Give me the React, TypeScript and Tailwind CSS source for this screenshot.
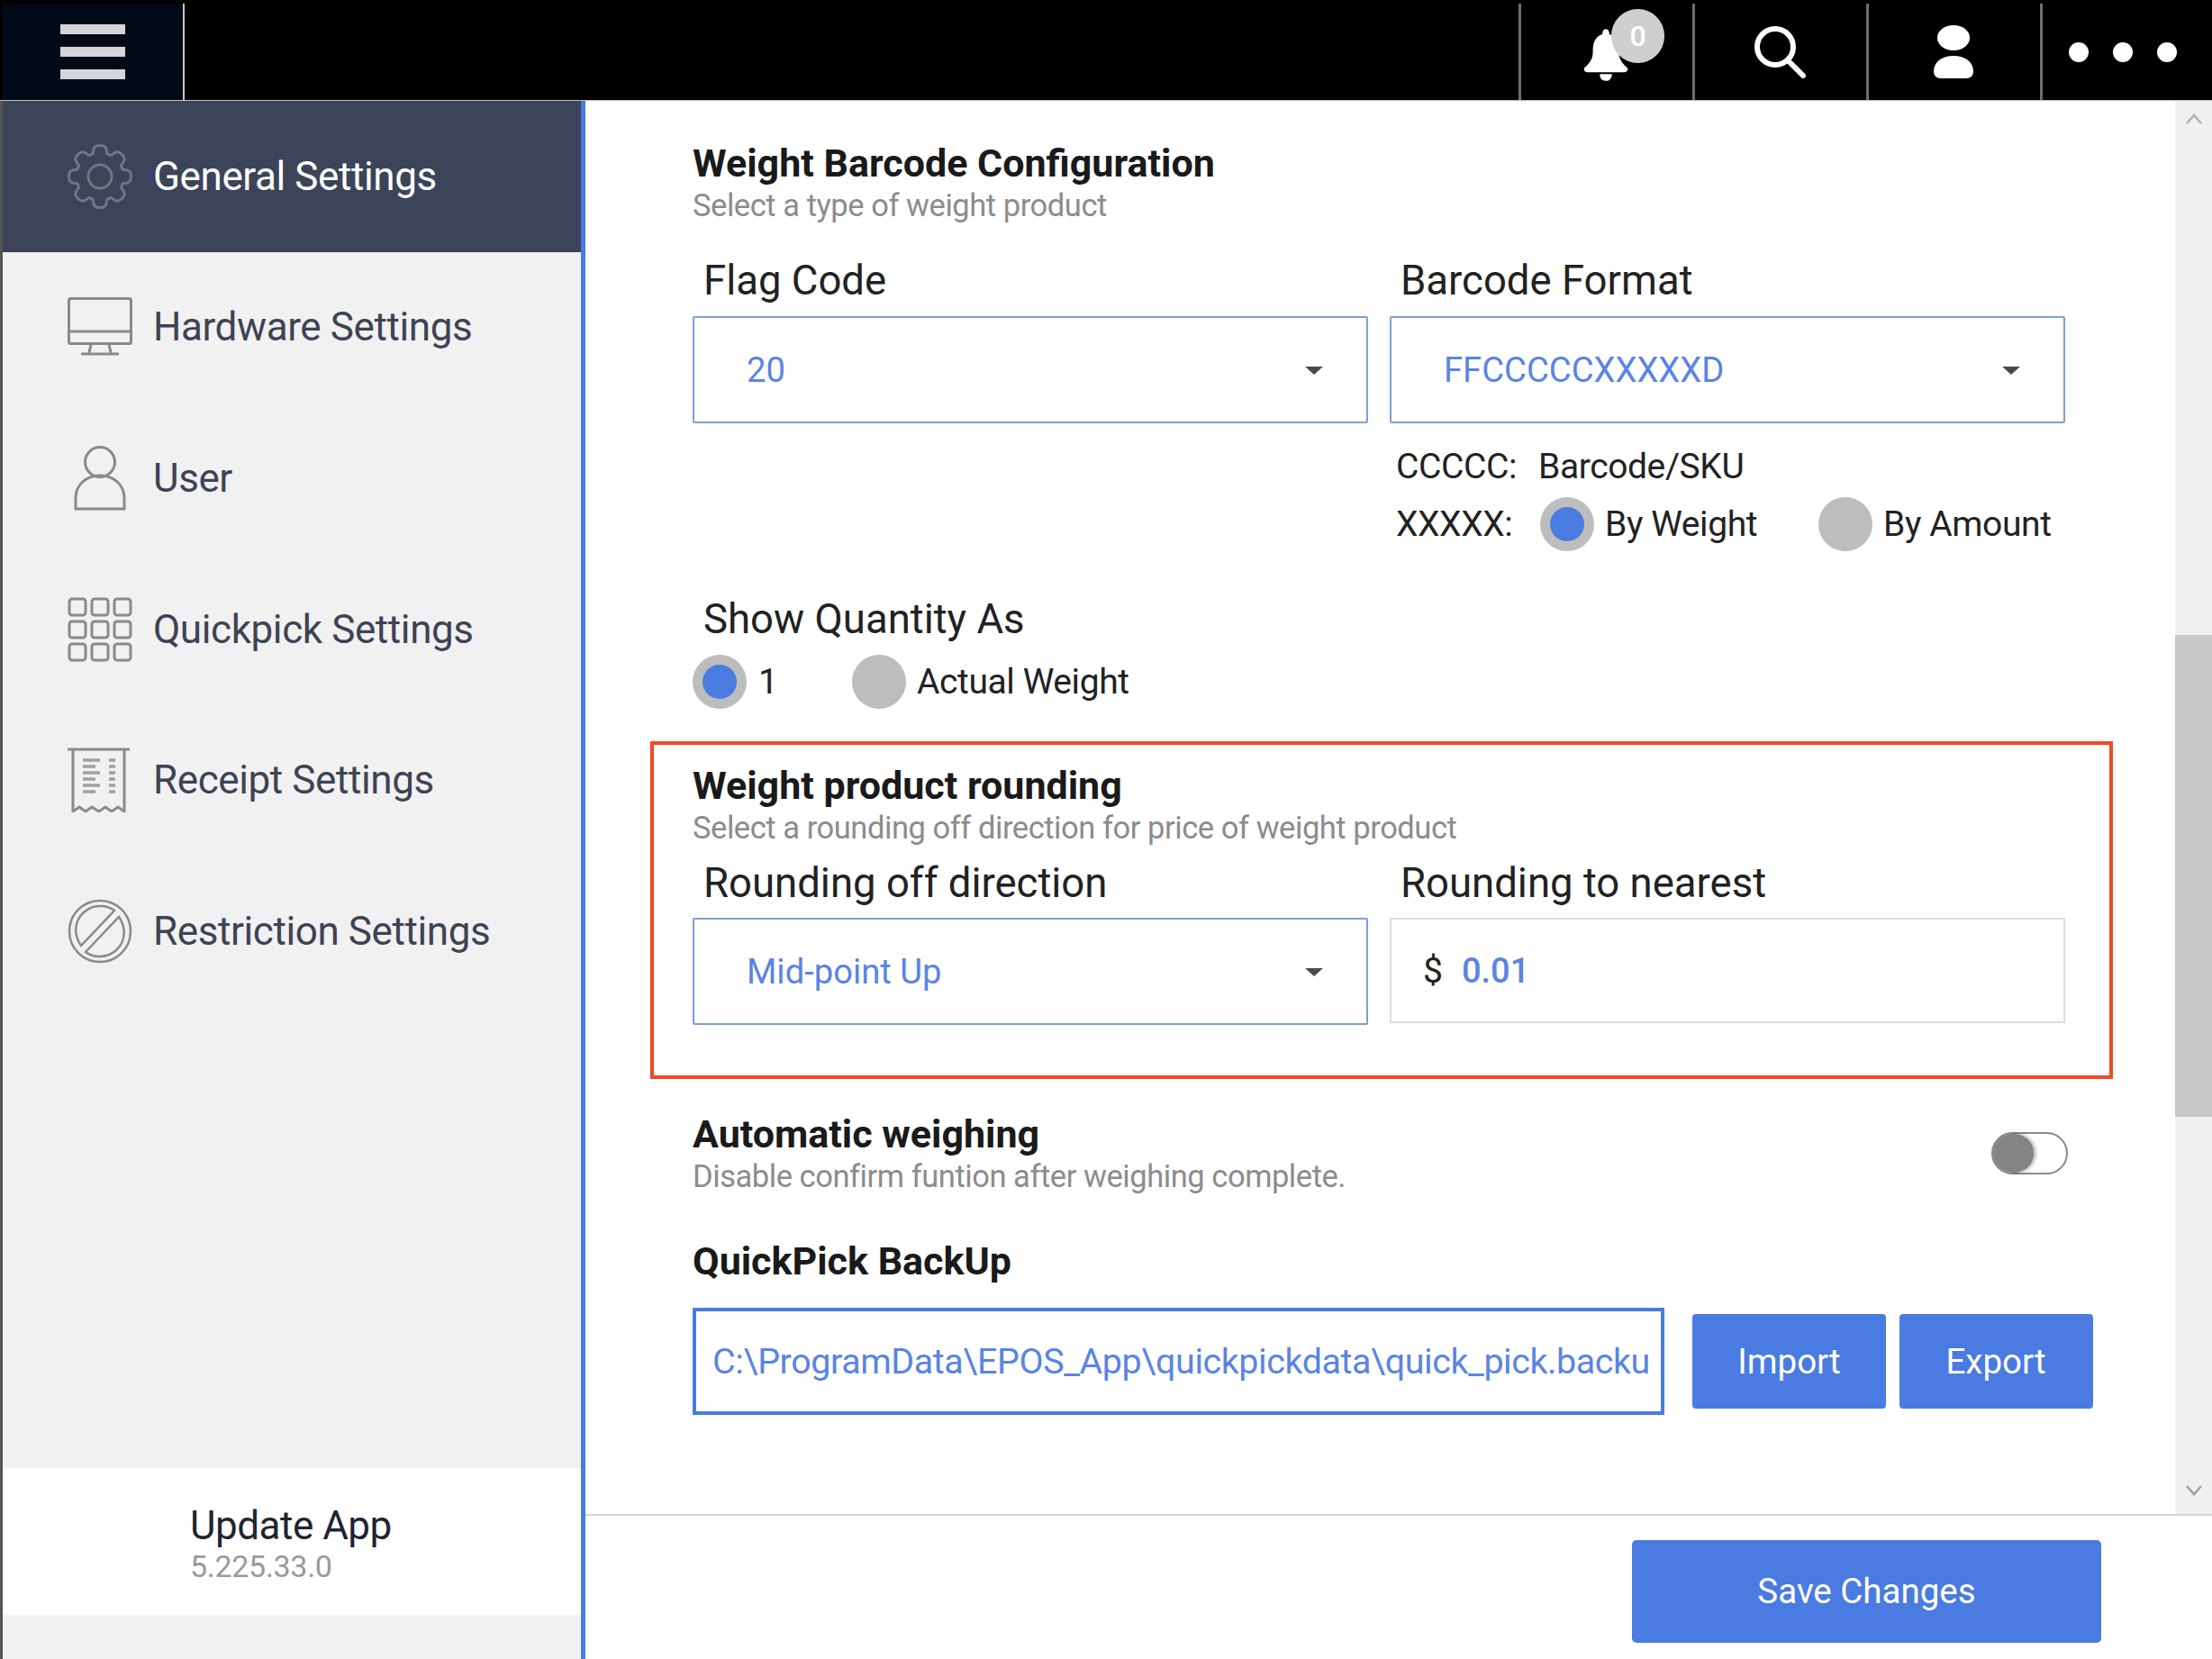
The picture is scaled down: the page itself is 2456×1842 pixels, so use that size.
import { ReactNode } from 'react';

const gearPath = (() => {
  let d = '';
  const at = (a: number, r: number) => `${(36 + r * Math.cos(a)).toFixed(1)} ${(36 + r * Math.sin(a)).toFixed(1)}`;
  for (let i = 0; i < 8; i++) {
    const a = (i * Math.PI) / 4 - Math.PI / 2;
    d += `${i === 0 ? 'M' : 'L'}${at(a - 0.3, 26.5)}`;
    d += `C${at(a - 0.22, 33)} ${at(a - 0.17, 35)} ${at(a, 34.5)}`;
    d += `C${at(a + 0.17, 35)} ${at(a + 0.22, 33)} ${at(a + 0.3, 26.5)}`;
  }
  return `${d}Z`;
})();

function GearIcon() {
  return (
    <svg width="72" height="72" viewBox="0 0 72 72" fill="none" stroke="#707685" strokeWidth="3" strokeLinejoin="round">
      <path d={gearPath} />
      <circle cx="36" cy="36" r="13" />
    </svg>
  );
}

function MonitorIcon() {
  return (
    <svg width="72" height="66" viewBox="0 0 72 66" fill="none" stroke="#8a8a8a" strokeWidth="3">
      <rect x="1.5" y="1.5" width="69" height="50" rx="2" />
      <path d="M2 38h68M26 52l-2 10M46 52l2 10M15 63h42" />
    </svg>
  );
}

function UserIcon() {
  return (
    <svg width="60" height="72" viewBox="0 0 60 72" fill="none" stroke="#8a8a8a" strokeWidth="3">
      <circle cx="30" cy="18" r="16.5" />
      <path d="M3 70V58C3 44 14 33 30 33s27 11 27 25v12z" />
    </svg>
  );
}

function GridIcon() {
  const cells = [0, 1, 2, 3, 4, 5, 6, 7, 8];
  return (
    <svg width="72" height="72" viewBox="0 0 72 72" fill="none" stroke="#8a8a8a" strokeWidth="3">
      {cells.map((i) => (
        <rect key={i} x={2 + (i % 3) * 25} y={2 + Math.floor(i / 3) * 25} width="18" height="18" rx="3" />
      ))}
    </svg>
  );
}

function ReceiptIcon() {
  return (
    <svg width="70" height="72" viewBox="0 0 70 72" fill="none" stroke="#8a8a8a" strokeWidth="3">
      <path d="M0 2h69M6 2v69l7-5 7 5 7-5 8 5 7-5 7 5 7-5 7 5V2" />
      <path d="M17 14h19M17 21h14M17 28h19M17 35h14M17 42h19M17 49h14" strokeWidth="3.5" stroke="#a0a0a0" />
      <path d="M46 14h7M46 21h7M46 28h7M46 35h7M46 42h7M46 49h7" strokeWidth="3.5" stroke="#a0a0a0" />
    </svg>
  );
}

function RestrictionIcon() {
  return (
    <svg width="72" height="72" viewBox="0 0 72 72" fill="none" stroke="#8a8a8a" strokeWidth="2.5">
      <circle cx="36" cy="36" r="34" />
      <path d="M15 52C6 39 8 24 18 15S43 6 52 13z" />
      <path d="M57 20c9 13 7 28-3 37s-25 9-34 2z" />
    </svg>
  );
}

function TopCell({ children }: { children: ReactNode }) {
  return <div className="relative flex h-full w-[193px] items-center justify-center border-l-[3px] border-[#6f6f6f]">{children}</div>;
}

function NavItem({ icon, label, active }: { icon: ReactNode; label: string; active?: boolean }) {
  return (
    <div className={`flex h-[167.6px] items-center ${active ? 'bg-[#3b4459] text-white' : 'text-[#3d4354]'}`}>
      <div className="ml-[71.5px] flex w-[95.5px] shrink-0">{icon}</div>
      <span className="text-[44px] tracking-[-0.4px]">{label}</span>
    </div>
  );
}

function Heading({ title, sub }: { title: string; sub: string }) {
  return (
    <div>
      <div className="text-[43px] font-bold leading-[40px] text-[#1a1a1a]">{title}</div>
      <div className="mt-[10px] text-[34.5px] leading-[34px] tracking-[-0.45px] text-[#8c8c8c]">{sub}</div>
    </div>
  );
}

function FieldLabel({ children }: { children: ReactNode }) {
  return <div className="pl-[12px] text-[45.5px] leading-[40px] text-[#222222]">{children}</div>;
}

function Select({ value }: { value: string }) {
  return (
    <div className="flex h-[119px] w-[750px] items-center justify-between rounded-[2px] border-2 border-[#7f9fd4] pl-[58px] pr-[48px]">
      <span className="mt-[3px] text-[38.2px] text-[#5a84e2]">{value}</span>
      <span className="mt-[2px] h-0 w-0 border-x-[10px] border-t-[9px] border-x-transparent border-t-[#4a4a4a]" />
    </div>
  );
}

function Radio({ checked }: { checked?: boolean }) {
  return (
    <span className="flex h-[60px] w-[60px] shrink-0 items-center justify-center rounded-full bg-[#bdbdbd]">
      {checked && <span className="h-[38px] w-[38px] rounded-full bg-[#4a7be0]" />}
    </span>
  );
}

export default function App() {
  return (
    <div className="flex h-[1842px] w-[2456px] flex-col overflow-hidden bg-white [font-family:Roboto,sans-serif]">
      {/* top bar */}
      <header className="flex h-[111px] shrink-0 bg-black pt-[4px]">
        <div className="ml-[3px] flex w-[202px] flex-col items-center justify-center gap-[14px] border-r-[2px] border-[#c8c8c8] bg-[#030a17]">
          <span className="h-[11px] w-[72px] bg-[#d4d4da]" />
          <span className="h-[11px] w-[72px] bg-[#d4d4da]" />
          <span className="h-[11px] w-[72px] bg-[#d4d4da]" />
        </div>
        <div className="flex-1" />
        <TopCell>
          <svg width="50" height="60" viewBox="0 0 52 62" fill="white" className="mr-[2px] mt-[6px]">
            <path d="M26 1c3 0 4 3 4 6 9 3 11 11 11 20 0 8 3 13 10 19 1 3-1 5-4 5H5c-3 0-5-2-4-5 7-6 10-11 10-19 0-9 2-17 11-20 0-3 1-6 4-6z" />
            <path d="M19 53h14c0 5-3 8-7 8s-7-3-7-8z" />
          </svg>
          <div className="absolute left-[100px] top-[6px] flex h-[60px] w-[59px] items-center justify-center rounded-full bg-[#cfcfcf] text-[32px] font-medium text-white">
            0
          </div>
        </TopCell>
        <TopCell>
          <svg width="60" height="58" viewBox="0 0 60 58" fill="none" stroke="white" strokeWidth="6" strokeLinecap="round">
            <circle cx="24" cy="23" r="20" />
            <path d="M39 39l16 16" />
          </svg>
        </TopCell>
        <TopCell>
          <svg width="46" height="60" viewBox="0 0 46 60" fill="white" className="mr-[2px]">
            <ellipse cx="23" cy="14" rx="18" ry="14" />
            <path d="M1 51c0-10 9-17 22-17s22 7 22 17c0 5-3 8-8 8H9c-5 0-8-3-8-8z" />
          </svg>
        </TopCell>
        <div className="flex h-full w-[191px] items-center justify-center gap-[27px] border-l-[3px] border-[#6f6f6f] pr-[10px]">
          <span className="h-[22px] w-[22px] rounded-full bg-white" />
          <span className="h-[22px] w-[22px] rounded-full bg-white" />
          <span className="h-[22px] w-[22px] rounded-full bg-white" />
        </div>
      </header>

      <div className="flex min-h-0 flex-1 border-t border-[#bdbdbd]">
        {/* sidebar */}
        <aside className="flex w-[650px] shrink-0 flex-col border-l-[3.5px] border-r-[5px] border-l-[#555555] border-r-[#4a7be0] bg-[#f1f1f1]">
          <NavItem active icon={<GearIcon />} label="General Settings" />
          <NavItem icon={<MonitorIcon />} label="Hardware Settings" />
          <NavItem icon={<div className="pl-[6px]"><UserIcon /></div>} label="User" />
          <NavItem icon={<GridIcon />} label="Quickpick Settings" />
          <NavItem icon={<ReceiptIcon />} label="Receipt Settings" />
          <NavItem icon={<RestrictionIcon />} label="Restriction Settings" />
          <div className="flex-1" />
          <div className="mb-[49px] flex h-[163px] flex-col justify-center bg-white pl-[208px] pt-[5px]">
            <div className="text-[44px] leading-[44px] tracking-[-0.5px] text-[#1e2433]">Update App</div>
            <div className="mt-[5px] text-[34px] leading-[36px] tracking-[-0.3px] text-[#9a9a9a]">5.225.33.0</div>
          </div>
        </aside>

        <main className="flex min-w-0 flex-1 flex-col">
          <div className="flex h-[1571px] shrink-0 border-b-[2px] border-[#d4d4d4]">
            <div className="flex-1 pl-[72px] pt-[49px]">
              <section className="pl-[47px]">
                <Heading title="Weight Barcode Configuration" sub="Select a type of weight product" />
                <div className="mt-[47px] grid w-[1524px] grid-cols-[750px_750px] gap-x-[24px]">
                  <FieldLabel>Flag Code</FieldLabel>
                  <FieldLabel>Barcode Format</FieldLabel>
                  <div className="mt-[19px]"><Select value="20" /></div>
                  <div className="mt-[19px]"><Select value="FFCCCCCXXXXXD" /></div>
                </div>
                <div className="ml-[781px] mt-[28px] flex h-[40px] items-center text-[39px] tracking-[-0.4px] text-[#222222]">
                  <span className="w-[158px]">CCCCC:</span>
                  <span>Barcode/SKU</span>
                </div>
                <div className="ml-[781px] mt-[14px] flex h-[60px] items-center text-[39px] tracking-[-0.4px] text-[#222222]">
                  <span className="w-[160px]">XXXXX:</span>
                  <Radio checked />
                  <span className="ml-[12px] w-[237px]">By Weight</span>
                  <Radio />
                  <span className="ml-[12px]">By Amount</span>
                </div>
                <div className="mt-[56px]"><FieldLabel>Show Quantity As</FieldLabel></div>
                <div className="mt-[19px] flex h-[60px] items-center text-[39px] tracking-[-0.4px] text-[#222222]">
                  <Radio checked />
                  <span className="ml-[13px] w-[104px]">1</span>
                  <Radio />
                  <span className="ml-[12px]">Actual Weight</span>
                </div>
              </section>

              {/* highlighted block */}
              <section className="mt-[36px] h-[375px] w-[1624px] border-4 border-[#f04a25] pl-[43px] pt-[25px]">
                <Heading title="Weight product rounding" sub="Select a rounding off direction for price of weight product" />
                <div className="mt-[25px] grid w-[1524px] grid-cols-[750px_750px] gap-x-[24px]">
                  <FieldLabel>Rounding off direction</FieldLabel>
                  <FieldLabel>Rounding to nearest</FieldLabel>
                  <div className="mt-[18px]"><Select value="Mid-point Up" /></div>
                  <div className="mt-[18px] flex h-[117px] w-[750px] items-center border-2 border-[#dddddd] pl-[35px]">
                    <span className="mt-[2px] text-[39px] text-[#222222]">$</span>
                    <span className="ml-[21px] mt-[2px] text-[38px] font-medium text-[#5a84e2]">0.01</span>
                  </div>
                </div>
              </section>

              <section className="pl-[47px]">
                <div className="mt-[41px] flex w-[1527px] items-start justify-between">
                  <Heading title="Automatic weighing" sub="Disable confirm funtion after weighing complete." />
                  <div className="relative mt-[18px] h-[47px] w-[85px] rounded-full border-2 border-[#8a8a8a] bg-white">
                    <span className="absolute left-0 top-0 h-[43px] w-[45px] rounded-full bg-[#848484] shadow-[2px_0_4px_rgba(0,0,0,0.35)]" />
                  </div>
                </div>
                <div className="mt-[57px] text-[43px] font-bold leading-[40px] text-[#1a1a1a]">QuickPick BackUp</div>
                <div className="mt-[32px] flex items-center">
                  <div className="flex h-[119px] w-[1079px] items-center overflow-hidden border-[4px] border-[#4a7be0] pl-[18px]">
                    <span className="whitespace-nowrap text-[39.4px] tracking-[-0.4px] text-[#5a84e2]">C:\ProgramData\EPOS_App\quickpickdata\quick_pick.backu</span>
                  </div>
                  <button className="ml-[31px] h-[105px] w-[215px] rounded-[4px] bg-[#4a7be0] text-[38.5px] text-white">Import</button>
                  <button className="ml-[14.5px] h-[105px] w-[215px] rounded-[4px] bg-[#4a7be0] text-[38.5px] text-white">Export</button>
                </div>
              </section>
            </div>

            {/* scrollbar */}
            <div className="flex w-[41px] shrink-0 flex-col items-center bg-[#f0f0f0] pb-[20px] pt-[14px]">
              <svg width="18" height="12" viewBox="0 0 18 12" fill="none" stroke="#b0b0b0" strokeWidth="2.5"><path d="M1 11l8-9 8 9" /></svg>
              <div className="mt-[567px] h-[535px] w-full bg-[#c8c8c8]" />
              <div className="flex-1" />
              <svg width="18" height="12" viewBox="0 0 18 12" fill="none" stroke="#a0a0a0" strokeWidth="2.5"><path d="M1 1l8 9 8-9" /></svg>
            </div>
          </div>

          <div className="flex flex-1 items-start justify-end pr-[123px] pt-[27px]">
            <button className="h-[114px] w-[521px] rounded-[5px] bg-[#4a7be0] text-[38.5px] text-white">Save Changes</button>
          </div>
        </main>
      </div>
    </div>
  );
}
